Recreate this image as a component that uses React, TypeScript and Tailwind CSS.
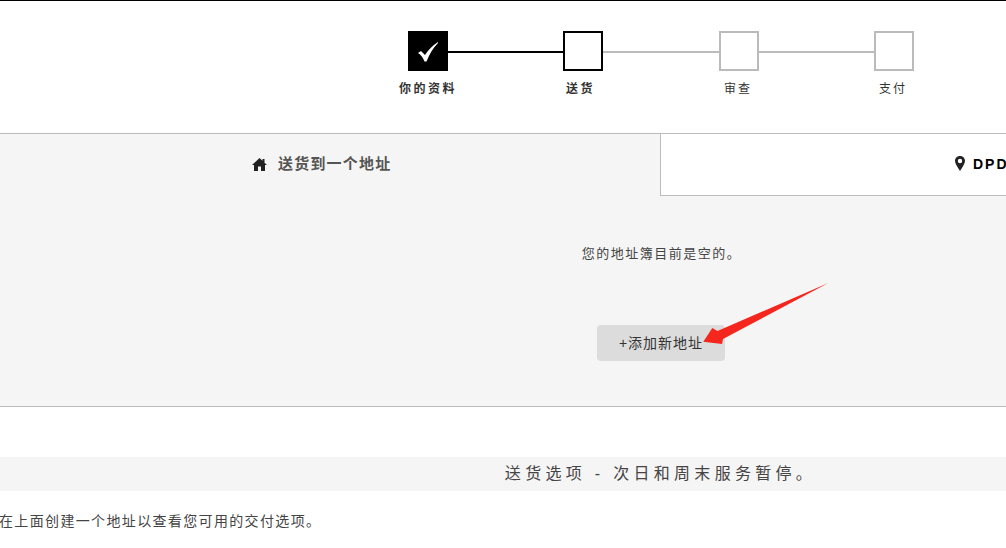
const font = "font-['Liberation_Sans','Noto_Sans_CJK_SC',sans-serif]";

function Box({ state }: { state: "done" | "current" | "todo" }) {
  if (state === "done") {
    return (
      <div className="flex h-10 w-10 shrink-0 items-center justify-center bg-black">
        <svg width="20" height="20" viewBox="0 0 20 20" className="mt-px">
          <path d="M0 11 L3 9 L7 13 C10 8 14 4 20 0 L20 1 C15 6 11.5 12 8.5 19.5 L6.5 19.5 C5 15.5 3 13 0 11 Z" fill="#fff" />
        </svg>
      </div>
    );
  }
  return (
    <div className={`h-10 w-10 shrink-0 border-2 bg-white ${state === "current" ? "border-black" : "border-[#bbb]"}`} />
  );
}

function Steps() {
  return (
    <div className="h-[132px] pl-[408px] pt-[30px]">
      <div className="flex items-center">
        <Box state="done" />
        <div className="mt-0.5 h-0.5 w-[115px] bg-black" />
        <Box state="current" />
        <div className="mt-0.5 h-0.5 w-[116px] bg-[#bbb]" />
        <Box state="todo" />
        <div className="mt-0.5 h-0.5 w-[115px] bg-[#bbb]" />
        <Box state="todo" />
      </div>
      <div className="mt-[10px] flex text-[12px] leading-4 tracking-[2px] text-[#333]">
        <span className="-ml-[9px] w-[167px] font-bold tracking-[2.5px]">你的资料</span>
        <span className="w-[158px] font-bold tracking-[2.5px]">送货</span>
        <span className="w-[155px]">审查</span>
        <span>支付</span>
      </div>
    </div>
  );
}

function Tabs() {
  return (
    <div className="flex h-[62px]">
      <div className="flex w-[660px] shrink-0 items-center pb-0.5 pl-[252px] text-[15px] font-bold tracking-[1.2px] text-[#555]">
        <svg width="15" height="13" viewBox="0 0 15 13" className="mr-[11px]">
          <path d="M7.5 0 L10.5 2.8 V1 H12.5 V4.7 L15 7 H13 V13 H9 V8.5 H6 V13 H2 V7 H0 Z" fill="#222" />
        </svg>
        送货到一个地址
      </div>
      <div className="flex flex-1 items-center whitespace-nowrap border-b border-l border-[#bbb] bg-white pl-[294px] text-[14px] font-bold tracking-[2px] text-black">
        <svg width="10" height="15" viewBox="0 0 10 15" className="mr-2 mb-0.5">
          <path fillRule="evenodd" d="M5 0 C8 0 10 2.2 10 5 C10 8 7 11.5 5 15 C3 11.5 0 8 0 5 C0 2.2 2 0 5 0 Z M5 2.8 A2.2 2.2 0 1 0 5 7.2 A2.2 2.2 0 1 0 5 2.8 Z" fill="#222" />
        </svg>
        DPD
      </div>
    </div>
  );
}

export default function App() {
  return (
    <div className={`h-[548px] w-[1006px] overflow-hidden border-t border-black bg-white ${font}`}>
      <Steps />
      <section className="relative border-y border-[#bbb] bg-[#f5f5f5]">
        <Tabs />
        <div className="flex h-[210px] flex-col items-center pl-[316px] pt-[48px]">
          <p className="ml-px text-[13px] leading-5 tracking-[1.5px] text-[#444]">您的地址簿目前是空的。</p>
          <button className="mt-[61px] flex h-9 w-[128px] items-center justify-center rounded bg-[#dcdcdc] text-[14px] tracking-[1px] text-[#333]">
            +添加新地址
          </button>
        </div>
        {/* annotation arrow drawn on top of the screenshot */}
        <svg width="140" height="80" viewBox="0 0 140 80" className="absolute left-[700px] top-[147px]">
          <path d="M3.3 60.7 L12.3 47 L17.5 50 L128.3 2 L23 58 L22 63 Z" fill="#f5261d" />
        </svg>
      </section>
      <div className="mt-[50px] flex h-[34px] items-center justify-center bg-[#f5f5f5] pl-[315px] text-[16px] tracking-[4.3px] text-[#444]">
        送货选项 - 次日和周末服务暂停。
      </div>
      <p className="-ml-px mt-[20px] text-[14px] leading-5 tracking-[1.35px] text-[#444]">在上面创建一个地址以查看您可用的交付选项。</p>
    </div>
  );
}
